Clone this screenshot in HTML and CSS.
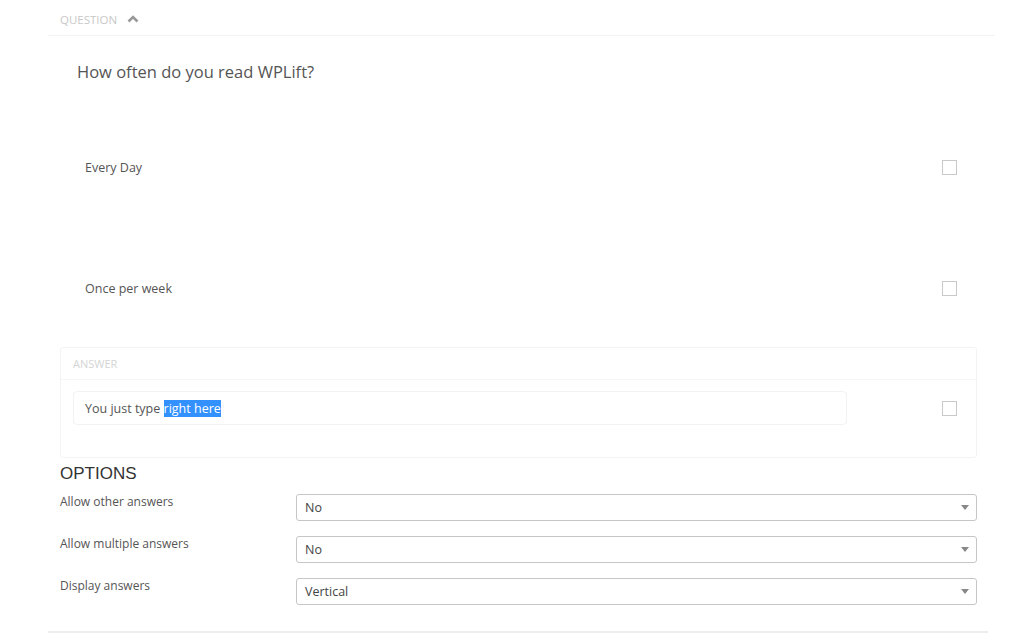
FILE: index.html
```html
<!DOCTYPE html>
<html lang="en">
<head>
    <meta charset="UTF-8">
    <meta name="viewport" content="width=device-width, initial-scale=1.0">
    <title>Question editor</title>
    <link rel="stylesheet" href="styles.css">
</head>
<body>
    <div class="editor">
        <div class="section-head">
            <span class="section-label">QUESTION</span>
            <svg class="chevron" width="12" height="8" viewBox="0 0 12 8">
                <path d="M1.5 6.5 L6 2 L10.5 6.5" fill="none" stroke="#999" stroke-width="2.6"/>
            </svg>
        </div>

        <h2 class="question-title">How often do you read WPLift?</h2>

        <div class="choices">
            <div class="choice">
                <span>Every Day</span>
                <span class="checkbox"></span>
            </div>
            <div class="choice">
                <span>Once per week</span>
                <span class="checkbox"></span>
            </div>
        </div>

        <div class="answer">
            <div class="answer-head">ANSWER</div>
            <div class="answer-body">
                <div class="answer-input">You just type <span class="selected">right here</span></div>
                <span class="checkbox"></span>
            </div>
        </div>

        <div class="options">
            <h3 class="options-title">OPTIONS</h3>
            <div class="option-row">
                <label>Allow other answers</label>
                <div class="select">No</div>
            </div>
            <div class="option-row">
                <label>Allow multiple answers</label>
                <div class="select">No</div>
            </div>
            <div class="option-row">
                <label>Display answers</label>
                <div class="select">Vertical</div>
            </div>
        </div>

        <div class="footer-line"></div>
    </div>
</body>
</html>
```

FILE: styles.css
```css
body {
    margin: 0;
    background-color: #fff;
    font-family: "Open Sans", "Noto Sans", sans-serif;
    color: #555;
}
.editor {
    margin-left: 48px;
    width: 947px;
}
.section-head {
    height: 36px;
    display: flex;
    align-items: center;
    gap: 10px;
    padding-left: 12px;
    padding-top: 3px;
    box-sizing: border-box;
    border-bottom: 1px solid #f3f3f3;
}
.section-label {
    font-size: 11.5px;
    color: #c8c8c8;
}
.question-title {
    margin: 25px 0 0 29px;
    font-size: 16.5px;
    line-height: 22px;
    font-weight: normal;
    color: #555;
}
.choices {
    margin-top: 69px;
    display: flex;
    flex-direction: column;
    gap: 91px;
}
.choice {
    height: 30px;
    display: flex;
    align-items: center;
    justify-content: space-between;
    padding: 0 38px 0 37px;
    font-size: 12.5px;
}
.checkbox {
    width: 13px;
    height: 13px;
    border: 1px solid #c9c9c9;
    background-color: #fff;
}
.answer {
    margin: 44px 18px 0 12px;
    border: 1px solid #f3f3f3;
    border-radius: 3px;
}
.answer-head {
    height: 31px;
    line-height: 31px;
    padding-left: 12px;
    font-size: 11px;
    color: #d4d4d4;
    border-bottom: 1px solid #f7f7f7;
}
.answer-body {
    display: flex;
    align-items: center;
    justify-content: space-between;
    padding: 11px 19px 32px 12px;
}
.answer-input {
    width: 761px;
    height: 32px;
    line-height: 33px;
    padding-left: 11px;
    border: 1px solid #f2f2f2;
    border-radius: 4px;
    font-size: 12.5px;
}
.selected {
    background-color: #3390ff;
    color: #fff;
}
.options {
    margin-left: 12px;
    margin-right: 18px;
}
.options-title {
    margin: 6px 0 10px;
    font-family: "Liberation Sans", Arial, sans-serif;
    font-size: 17px;
    line-height: 20px;
    font-weight: normal;
    color: #333;
}
.option-row {
    display: flex;
    align-items: flex-start;
    margin-bottom: 15px;
}
.option-row label {
    width: 236px;
    font-size: 12px;
    line-height: 16px;
}
.select {
    position: relative;
    flex: 1;
    height: 25px;
    line-height: 26px;
    padding-left: 8px;
    border: 1px solid #c6c6c6;
    border-radius: 3px;
    font-size: 12.5px;
    color: #444;
}
.select::after {
    content: "";
    position: absolute;
    right: 7px;
    top: 10px;
    border-left: 4px solid transparent;
    border-right: 4px solid transparent;
    border-top: 5px solid #888;
}
.footer-line {
    margin-top: 26px;
    width: 940px;
    height: 2px;
    background-color: #eeeeee;
}
```
